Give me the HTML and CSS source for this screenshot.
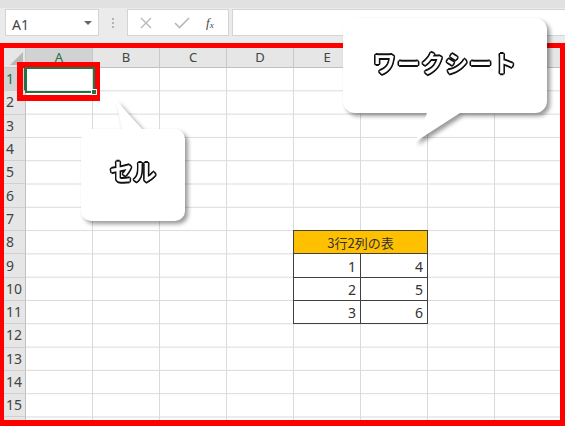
FILE: index.html
```html
<!DOCTYPE html>
<html lang="ja">
<head>
<meta charset="utf-8">
<title>ワークシート</title>
<link rel="stylesheet" href="styles.css">
</head>
<body>
<div class="app">
  <div class="toolbar">
    <div class="namebox">
      <span class="namebox-text">A1</span>
      <span class="namebox-arrow"></span>
    </div>
    <div class="dots"><i></i><i></i><i></i></div>
    <div class="fbuttons">
      <svg class="ficon" width="12" height="12" viewBox="0 0 12 12"><path d="M1 1 L11 11 M11 1 L1 11" stroke="#b8b8b8" stroke-width="1.4" fill="none"/></svg>
      <svg class="ficon" width="16" height="12" viewBox="0 0 16 12"><path d="M1 6 L5.5 10.5 L15 1" stroke="#b8b8b8" stroke-width="1.6" fill="none"/></svg>
      <span class="fx">f<sub>x</sub></span>
    </div>
    <div class="formula"></div>
  </div>
  <div class="sheet-wrap">
    <div class="sheet">
      <div class="corner"><span class="corner-tri"></span></div>
      <div class="colh sel">A</div>
      <div class="colh">B</div>
      <div class="colh">C</div>
      <div class="colh">D</div>
      <div class="colh">E</div>
      <div class="colh">F</div>
      <div class="colh">G</div>
      <div class="colh">H</div>
      <div class="rowh sel">1</div>
      <div class="rowh">2</div>
      <div class="rowh">3</div>
      <div class="rowh">4</div>
      <div class="rowh">5</div>
      <div class="rowh">6</div>
      <div class="rowh">7</div>
      <div class="rowh">8</div>
      <div class="rowh">9</div>
      <div class="rowh">10</div>
      <div class="rowh">11</div>
      <div class="rowh">12</div>
      <div class="rowh">13</div>
      <div class="rowh">14</div>
      <div class="rowh">15</div>
      <div class="rowh"></div>
      <div class="cells"></div>
      <div class="active"><span class="handle"></span></div>
      <div class="tcell thead">3行2列の表</div>
      <div class="tcell c-e r9">1</div>
      <div class="tcell c-f r9">4</div>
      <div class="tcell c-e r10">2</div>
      <div class="tcell c-f r10">5</div>
      <div class="tcell c-e r11">3</div>
      <div class="tcell c-f r11">6</div>
    </div>
  </div>

  <div class="frame"></div>
  <div class="cellmark"></div>

  <div class="callout callout-cell">
    <svg class="bubble" width="104" height="121" viewBox="0 0 104 121">
      <path d="M10 29 H41 L35 0 L61 29 H94 A10 10 0 0 1 104 39 V111 A10 10 0 0 1 94 121 H10 A10 10 0 0 1 0 111 V39 A10 10 0 0 1 10 29 Z" fill="#fff"/>
    </svg>
    <div class="label cell-label">セル</div>
  </div>

  <div class="callout callout-sheet">
    <svg class="bubble" width="204" height="124" viewBox="0 0 204 124">
      <path d="M12 0 H192 A12 12 0 0 1 204 12 V83 A12 12 0 0 1 192 95 H117 L72 124 L84 95 H12 A12 12 0 0 1 0 83 V12 A12 12 0 0 1 12 0 Z" fill="#fff"/>
    </svg>
    <div class="label sheet-label">ワークシート</div>
  </div>
</div>
</body>
</html>
```

FILE: styles.css
```css
* { box-sizing: border-box; }
html, body {
  margin: 0;
  padding: 0;
  background: #fff;
}
body {
  font-family: "Noto Sans", "Noto Sans CJK JP", sans-serif;
  width: 565px;
  height: 426px;
  overflow: hidden;
}
.app {
  position: relative;
  width: 565px;
  height: 426px;
  overflow: hidden;
}

/* toolbar / formula bar */
.toolbar {
  height: 43px;
  background: #ebebeb;
  border-top: 8px solid #e1e1e1;
  display: flex;
  align-items: flex-start;
  padding: 1px 0 0 5px;
}
.namebox {
  width: 94px;
  height: 27px;
  background: #fff;
  border: 1px solid #d4d4d4;
  display: flex;
  align-items: center;
  justify-content: space-between;
  padding: 0 6px 0 6px;
}
.namebox-text {
  font-size: 14px;
  color: #444;
  padding-top: 3px;
}
.namebox-arrow {
  width: 0;
  height: 0;
  border-left: 4px solid transparent;
  border-right: 4px solid transparent;
  border-top: 4px solid #666;
}
.dots {
  width: 28px;
  height: 27px;
  display: flex;
  flex-direction: column;
  align-items: center;
  justify-content: center;
  gap: 2px;
}
.dots i {
  display: block;
  width: 2px;
  height: 2px;
  background: #b4b4b4;
}
.fbuttons {
  width: 102px;
  height: 27px;
  background: #fff;
  border: 1px solid #d4d4d4;
  display: flex;
  align-items: center;
  padding-left: 12px;
}
.ficon { display: block; }
.fbuttons .ficon:first-child { margin-right: 22px; }
.fbuttons .ficon:nth-child(2) { margin-right: 16px; }
.fx {
  font-family: "Liberation Serif", serif;
  font-style: italic;
  font-size: 13px;
  color: #444;
  line-height: 1;
}
.fx sub { font-size: 9px; vertical-align: -1px; }
.formula {
  margin-left: 3px;
  flex: 1;
  height: 27px;
  background: #fff;
  border: 1px solid #d4d4d4;
  border-right: none;
}

/* sheet */
.sheet-wrap {
  padding: 5px 0 0 4px;
}
.sheet {
  display: grid;
  grid-template-columns: 22px repeat(8, 67px);
  grid-template-rows: 20px repeat(16, 23.3px);
  width: 558px;
}
.corner {
  grid-column: 1;
  grid-row: 1;
  background: #e6e6e6;
  border-right: 1px solid #c8c8c8;
  border-bottom: 1px solid #c8c8c8;
  position: relative;
}
.corner-tri {
  position: absolute;
  right: 2px;
  bottom: 2px;
  width: 0;
  height: 0;
  border-left: 13px solid transparent;
  border-bottom: 13px solid #b8b8b8;
}
.colh {
  grid-row: 1;
  background: #e6e6e6;
  border-right: 1px solid #c8c8c8;
  border-bottom: 1px solid #c0c0c0;
  font-size: 13px;
  color: #444;
  display: flex;
  align-items: center;
  justify-content: center;
  line-height: 1;
}
.colh.sel {
  background: #d2d2d2;
  color: #217346;
  border-bottom: 2px solid #217346;
}
.rowh {
  grid-column: 1;
  background: #e6e6e6;
  border-right: 1px solid #c0c0c0;
  border-bottom: 1px solid #d0d0d0;
  font-size: 14px;
  color: #444;
  display: flex;
  align-items: center;
  padding-left: 2px;
  line-height: 1;
}
.rowh.sel {
  background: #d2d2d2;
  color: #217346;
  border-right: 2px solid #217346;
}
.cells {
  grid-column: 2 / -1;
  grid-row: 2 / -1;
  background-image:
    linear-gradient(to right, transparent 66px, #dadada 66px),
    linear-gradient(to bottom, transparent 22.3px, #dadada 22.3px);
  background-size: 67px 100%, 100% 23.3px;
}
.active {
  grid-column: 2;
  grid-row: 2;
  margin: -1px -2px -2px -1px;
  border: 2px solid #217346;
  position: relative;
  z-index: 2;
}
.handle {
  position: absolute;
  right: -4px;
  bottom: -4px;
  width: 6px;
  height: 6px;
  background: #217346;
  border: 1px solid #fff;
}
.tcell {
  margin: -1px 0 0 -1px;
  border: 1px solid #404040;
  background: #fff;
  font-size: 14px;
  color: #333;
  display: flex;
  align-items: center;
  justify-content: flex-end;
  padding: 2px 4px 0 0;
  line-height: 1;
  z-index: 1;
}
.thead {
  grid-column: 6 / 8;
  grid-row: 9;
  background: #ffc000;
  justify-content: center;
  font-family: "Noto Sans CJK JP", sans-serif;
  font-size: 13px;
  padding: 0;
}
.c-e { grid-column: 6; }
.c-f { grid-column: 7; }
.r9 { grid-row: 10; }
.r10 { grid-row: 11; }
.r11 { grid-row: 12; }

/* annotations */
.frame {
  position: absolute;
  left: 0;
  top: 43px;
  width: 565px;
  height: 383px;
  border-style: solid;
  border-color: #ff0000;
  border-width: 5px 5px 6px 4px;
  pointer-events: none;
}
.cellmark {
  position: absolute;
  left: 17px;
  top: 62px;
  width: 83px;
  height: 39px;
  border: 6px solid #ff0000;
}
.callout {
  position: absolute;
  filter: drop-shadow(3px 3px 2px rgba(0, 0, 0, 0.4));
}
.bubble {
  display: block;
}
.callout-cell {
  left: 81px;
  top: 100px;
  width: 104px;
  height: 121px;
}
.callout-sheet {
  left: 343px;
  top: 18px;
  width: 204px;
  height: 124px;
}
.label {
  position: absolute;
  left: 0;
  width: 100%;
  display: flex;
  align-items: center;
  justify-content: center;
  font-family: "Noto Sans CJK JP", sans-serif;
  font-weight: 700;
  font-size: 23px;
  line-height: 1;
  color: #ffffff;
  text-shadow:
    1.6px 0 0 #111, -1.6px 0 0 #111, 0 1.6px 0 #111, 0 -1.6px 0 #111,
    1.2px 1.2px 0 #111, -1.2px 1.2px 0 #111, 1.2px -1.2px 0 #111, -1.2px -1.2px 0 #111,
    0 0 2px #777;
}
.cell-label {
  top: 29px;
  height: 92px;
  padding-bottom: 10px;
}
.sheet-label {
  top: 0;
  height: 95px;
  padding-bottom: 6px;
  letter-spacing: 1px;
}
```
